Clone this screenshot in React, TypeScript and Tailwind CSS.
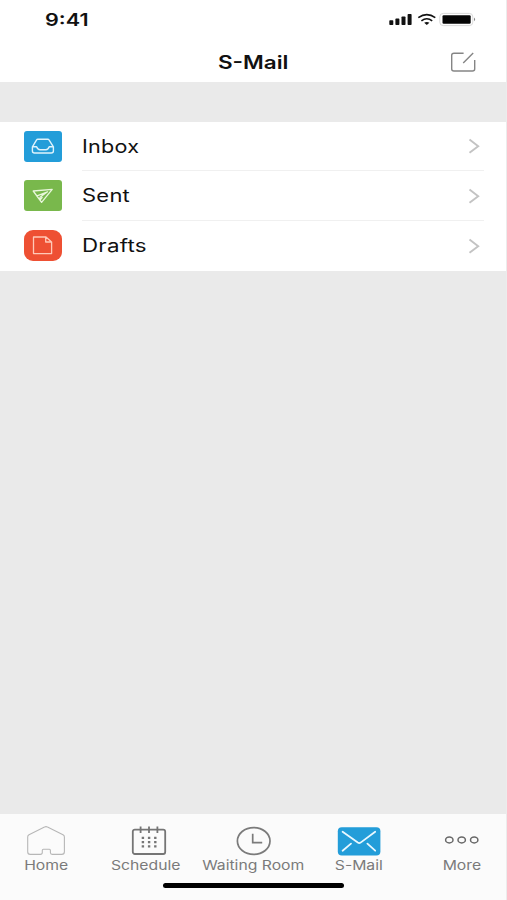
import type { ReactNode } from "react";

const folders = [
  { name: "Inbox", row: "h-[49px]", color: "bg-[#239dd9] rounded-[3px]", text: "scale-x-[1.2]", icon: <InboxIcon /> },
  { name: "Sent", row: "h-[50px]", color: "bg-[#79b84c] rounded-[3px]", text: "scale-x-[1.22]", icon: <SentIcon /> },
  { name: "Drafts", row: "h-[50px]", color: "bg-[#ee5033] rounded-[9px]", text: "scale-x-[1.24]", icon: <DraftIcon /> },
];

const tabs = [
  { name: "Home", box: "w-[92px]", icon: <HomeIcon /> },
  { name: "Schedule", box: "w-[108px]", icon: <ScheduleIcon /> },
  { name: "Waiting Room", box: "w-[107px]", icon: <ClockIcon /> },
  { name: "S-Mail", box: "w-[104px]", icon: <MailIcon /> },
  { name: "More", box: "w-[95px] pl-[7px]", icon: <MoreIcon /> },
];

function InboxIcon() {
  return (
    <svg width="38" height="31" viewBox="0 0 38 31" fill="none" stroke="#dff3fc" strokeWidth="1.4" strokeLinejoin="round">
      <path d="M8.4 15.8 12.6 8.9Q13 8.2 13.8 8.2H23.8Q24.6 8.2 25 8.9L29.4 15.8V20Q29.4 22 27.2 22H10.6Q8.4 22 8.4 20ZM8.4 15.8H12.6Q13.6 18.7 16 18.7H22Q24.2 18.7 25.2 15.8H29.4" />
    </svg>
  );
}

function SentIcon() {
  return (
    <svg width="38" height="31" viewBox="0 0 38 31" fill="none" stroke="#e9f6dc" strokeWidth="1.3" strokeLinejoin="round">
      <path d="M9.2 11 28.2 9.4 17.6 22.4ZM13 15.8 23.5 11.8 16 17.2V20.2L18.4 17" />
    </svg>
  );
}

function DraftIcon() {
  return (
    <svg width="38" height="31" viewBox="0 0 38 31" fill="none" stroke="#ffc9b8" strokeWidth="1.3" strokeLinejoin="round">
      <path d="M9.5 7H22L27.6 12V23.6H9.5ZM21.7 7V12H27.6" />
    </svg>
  );
}

function HomeIcon() {
  return (
    <svg width="44" height="32" viewBox="0 0 44 32" fill="none" stroke="#b7b7b7" strokeWidth="1.1" strokeLinejoin="round">
      <path d="M3.7 12Q3.7 10.5 5 9.8L20.5 2Q22 1.2 23.5 2L39 9.8Q40.4 10.5 40.4 12V26.7Q40.4 29.4 37.7 29.4H28.2Q26.4 29.4 26.4 27.5V25.2Q26.4 24.2 25.4 24.2H19.3Q18.3 24.2 18.3 25.2V27.5Q18.3 29.4 16.3 29.4H6.2Q3.7 29.4 3.7 26.7Z" />
    </svg>
  );
}

function ScheduleIcon() {
  return (
    <svg className="ml-[6px]" width="38" height="32" viewBox="0 0 38 32" fill="none" stroke="#757575" strokeWidth="1.8">
      <rect x="2.8" y="4.6" width="32.4" height="24.4" rx="2" />
      <path d="M10.6 1.4V8M19 1.4V8M27.4 1.4V8" />
      <path d="M11.7 12.8H14.1M17.9 12.8H20.3M24.1 12.8H26.5M11.7 17.1H14.1M17.9 17.1H20.3M24.1 17.1H26.5M11.7 21.4H14.1M17.9 21.4H20.3M24.1 21.4H26.5" strokeWidth="2.2" />
    </svg>
  );
}

function ClockIcon() {
  return (
    <svg width="38" height="32" viewBox="0 0 38 32" fill="none" stroke="#7b7b7b" strokeWidth="1.7">
      <ellipse cx="18.7" cy="16" rx="16.3" ry="13.4" />
      <path d="M17.7 8.7V17.7H27.2" />
    </svg>
  );
}

function MailIcon() {
  return (
    <svg width="44" height="32" viewBox="0 0 44 32" fill="none" stroke="#e9f8ff" strokeWidth="1.8" strokeLinecap="round">
      <rect x="0.8" y="2.2" width="42.6" height="28.2" rx="4" fill="#239dd9" stroke="none" />
      <path d="M5.6 6.8 20.8 17.6Q22.2 18.5 23.6 17.6L38.2 6.8M5.6 25.7 14 18.6M38.2 25.7 30.4 18.6" />
    </svg>
  );
}

function MoreIcon() {
  return (
    <svg width="38" height="32" viewBox="0 0 38 32" fill="none" stroke="#686868" strokeWidth="1.5">
      <ellipse cx="6.3" cy="14.9" rx="3.7" ry="3" />
      <ellipse cx="18.7" cy="14.9" rx="3.7" ry="3" />
      <ellipse cx="31.2" cy="14.9" rx="3.7" ry="3" />
    </svg>
  );
}

function StatusIcons() {
  return (
    <svg width="90" height="16" viewBox="0 0 90 16" fill="none">
      <g fill="#111">
        <rect x="1.3" y="8.2" width="4" height="4.8" rx="0.8" />
        <rect x="7.4" y="6.6" width="4" height="6.4" rx="0.8" />
        <rect x="13.5" y="4.4" width="4" height="8.6" rx="0.8" />
        <rect x="19.6" y="2" width="4" height="11" rx="0.8" />
      </g>
      <g stroke="#111" strokeWidth="1.6">
        <path d="M30.3 5.6Q38.8 -0.4 47.3 5.6" />
        <path d="M33.4 8.8Q38.8 4.8 44.2 8.8" />
      </g>
      <path d="M36.2 10.7Q38.8 9.1 41.4 10.7L38.8 13Z" fill="#111" />
      <rect x="51.8" y="1.4" width="33" height="12.2" rx="3.4" stroke="#d5d5d5" strokeWidth="0.9" />
      <rect x="54.5" y="3.2" width="28.2" height="8.6" rx="1.2" fill="#050505" />
      <path d="M86.1 5.5Q88.2 7.4 86.1 9.3Z" fill="#777" />
    </svg>
  );
}

function Wide({ className, children }: { className: string; children: ReactNode }) {
  return <span className={`inline-block whitespace-nowrap ${className}`}>{children}</span>;
}

export default function App() {
  return (
    <div className="flex h-[900px] w-[507px] flex-col overflow-hidden border-r border-[#ececec] bg-[#eaeaea] font-['Inter',sans-serif] text-[#111]">
      <header className="h-[82px] bg-white">
        <div className="flex h-10 items-center justify-between pl-[45px] pr-[28px]">
          <Wide className="origin-left scale-x-[1.27] pt-[2px] text-[17px] font-semibold">9:41</Wide>
          <StatusIcons />
        </div>
        <div className="grid h-[42px] grid-cols-[1fr_auto_1fr] items-center pt-0.5 pr-[30px] pl-[31px]">
          <Wide className="col-start-2 scale-x-[1.25] text-[18px] font-semibold">S-Mail</Wide>
          <svg className="justify-self-end" width="26" height="22" viewBox="0 0 26 22" fill="none" stroke="#858585" strokeWidth="1.4">
            <path d="M13.6 2.2H4Q1.7 2.2 1.7 4.2V18Q1.7 20 4 20H22.4Q24.7 20 24.7 18V9M13.2 12 23.2 2" />
          </svg>
        </div>
      </header>

      <main className="flex-1 pt-10">
        <ul className="bg-white">
          {folders.map((f, i) => (
            <li key={f.name} className={`flex items-center pl-6 ${f.row}`}>
              <div className={`mb-px flex h-[31px] w-[38px] items-center justify-center ${f.color}`}>{f.icon}</div>
              <div className={`ml-5 mr-[22px] flex h-full flex-1 items-center justify-between border-b ${i < 2 ? "border-[#f0f0f0]" : "border-transparent"}`}>
                <Wide className={`origin-left text-[18px] tracking-[0.2px] ${f.text}`}>{f.name}</Wide>
                <svg className="mr-[3px]" width="14" height="18" viewBox="0 0 14 18" fill="none" stroke="#c3c3c3" strokeWidth="1.9">
                  <path d="M2.5 2.6 11.2 9.2 2.5 15.8" />
                </svg>
              </div>
            </li>
          ))}
        </ul>
      </main>

      <nav className="flex h-[86px] flex-col items-center bg-[#fbfbfb]">
        <div className="flex w-full pt-[11px]">
          {tabs.map((t) => (
            <button key={t.name} className={`flex flex-col items-center ${t.box}`}>
              {t.icon}
              <Wide className="scale-x-[1.21] text-[13px] leading-4 text-[#7a7a7a]">{t.name}</Wide>
            </button>
          ))}
        </div>
        <div className="mt-[10px] h-[5px] w-[181px] rounded-full bg-black" />
      </nav>
    </div>
  );
}
